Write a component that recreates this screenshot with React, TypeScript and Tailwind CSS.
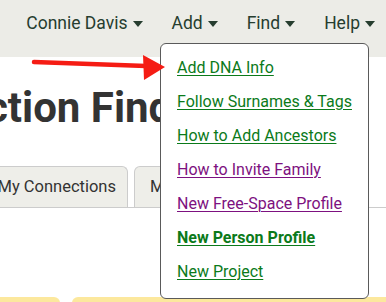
const menuItems = [
  { label: "Add DNA Info", color: "text-[#0b7a1a]", bold: false },
  { label: "Follow Surnames & Tags", color: "text-[#0b7a1a]", bold: false },
  { label: "How to Add Ancestors", color: "text-[#0b7a1a]", bold: false },
  { label: "How to Invite Family", color: "text-[#7d1180]", bold: false },
  { label: "New Free-Space Profile", color: "text-[#7d1180]", bold: false },
  { label: "New Person Profile", color: "text-[#0b7a1a]", bold: true },
  { label: "New Project", color: "text-[#0b7a1a]", bold: false },
];

const navItems = ["Connie Davis", "Add", "Find", "Help"];

function Caret() {
  return (
    <svg width="10" height="6" viewBox="0 0 10 6" className="ml-[5px] mt-[1px]">
      <path d="M0 0 L10 0 L5 6 Z" fill="currentColor" />
    </svg>
  );
}

export default function App() {
  return (
    <div className="relative w-[386px] h-[302px] overflow-hidden bg-white font-['Roboto',sans-serif]">
      {/* Top nav */}
      <div className="h-[57px] bg-[#ecece7] flex items-start justify-end pr-[11px] pt-[10px] gap-[29px] text-[#263d2f] text-[17.5px]">
        {navItems.map(item => (
          <div key={item} className="flex items-center h-[26px]">
            {item}
            <Caret />
          </div>
        ))}
      </div>

      {/* Page title */}
      <div className="ml-[-135px] mt-[27px] whitespace-nowrap text-[42px] font-bold text-[#333333] leading-[48px]">
        Connection Finder
      </div>

      {/* Tabs */}
      <div className="mt-[34px] flex items-end gap-[6px] border-b border-[#cccccc] h-[42px] ml-[-20px]">
        <div className="h-[41px] pr-[11px] flex items-center bg-[#eeeee9] border border-b-0 border-[#cccccc] rounded-t-[6px] text-[16.5px] text-[#333333] w-[148px] justify-end">
          My Connections
        </div>
        <div className="h-[41px] pl-[15px] flex items-center bg-[#eeeee9] border border-b-0 border-[#cccccc] rounded-t-[6px] text-[16.5px] text-[#333333] w-[120px]">
          My Tree
        </div>
      </div>

      {/* Yellow bar at bottom */}
      <div className="mt-[89px] flex gap-[12px]">
        <div className="h-[10px] w-[60px] bg-[#fce89d] rounded-tr-[6px]" />
        <div className="h-[10px] flex-1 bg-[#fce89d] rounded-tl-[6px]" />
      </div>

      {/* Dropdown menu */}
      <div className="absolute left-[160px] top-[43px] w-[209px] h-[256px] bg-white border border-[#5a5a5a] rounded-[6px] pt-[12px] pl-[16px]">
        {menuItems.map(item => (
          <div key={item.label} className="h-[34px]">
            <span
              className={`${item.color} ${item.bold ? "font-bold" : ""} underline underline-offset-[2px] decoration-1 text-[16px] leading-[22px]`}
            >
              {item.label}
            </span>
          </div>
        ))}
      </div>

      {/* Red arrow annotation */}
      <svg className="absolute left-0 top-0" width="386" height="302" viewBox="0 0 386 302">
        <line x1="34" y1="62" x2="146" y2="66" stroke="#f51c14" strokeWidth="4.5" strokeLinecap="round" />
        <path d="M143 55 L165 67 L144 80 Z" fill="#f51c14" />
      </svg>
    </div>
  );
}
